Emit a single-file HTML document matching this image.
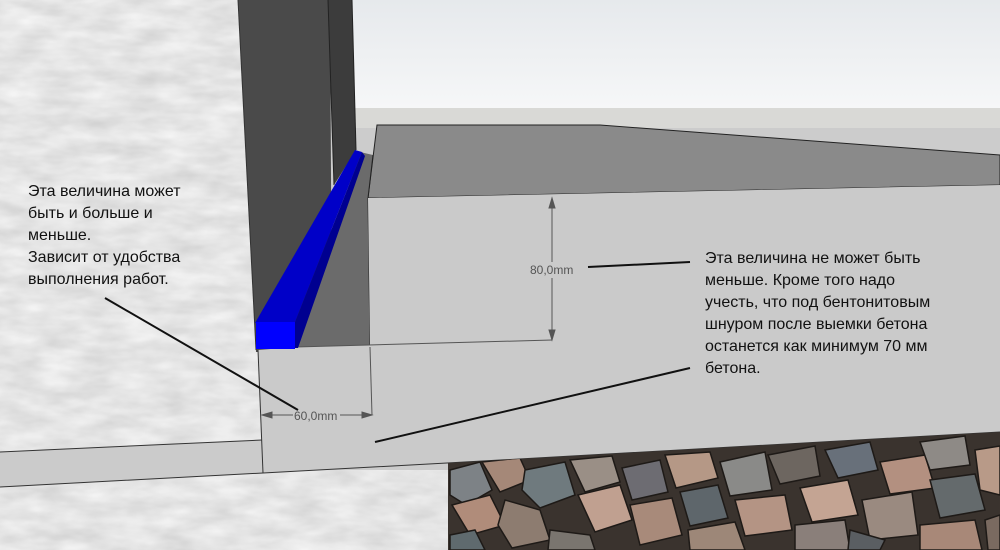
<!DOCTYPE html>
<html><head><meta charset="utf-8"><style>
html,body{margin:0;padding:0;width:1000px;height:550px;overflow:hidden;background:#c9c9c9}
svg{display:block}
text{font-family:"Liberation Sans",sans-serif}
</style></head><body>
<svg width="1000" height="550" viewBox="0 0 1000 550" xmlns="http://www.w3.org/2000/svg">
<defs>
<linearGradient id="sky" x1="0" y1="0" x2="0" y2="1"><stop offset="0" stop-color="#e6e9ec"/><stop offset="1" stop-color="#f6f7f8"/></linearGradient>
<filter id="noise" x="0" y="0" width="100%" height="100%"><feTurbulence type="fractalNoise" baseFrequency="0.025 0.07" numOctaves="3" seed="3"/><feColorMatrix type="matrix" values="0.32 0 0 0 0.62  0.32 0 0 0 0.62  0.32 0 0 0 0.62  0 0 0 0 1"/></filter>
</defs>
<rect width="1000" height="550" fill="#cccccc"/>
<rect width="262" height="550" filter="url(#noise)"/>
<rect x="0" y="470" width="450" height="80" filter="url(#noise)"/>
<rect x="352" y="0" width="648" height="108" fill="url(#sky)"/>
<rect x="352" y="108" width="648" height="20" fill="#d9d9d6"/>
<polygon points="238,0 330,0 332,350 256,352" fill="#4a4a4a"/>
<polygon points="328,0 352,0 356,150 334,185" fill="#3c3c3c"/>
<line x1="328" y1="0" x2="334" y2="185" stroke="#222" stroke-width="1"/>
<line x1="238" y1="0" x2="256" y2="350" stroke="#333" stroke-width="1"/>
<line x1="352" y1="0" x2="356" y2="150" stroke="#222" stroke-width="1"/>
<polygon points="377,125 600,125 1000,155 1000,185 368,198" fill="#8a8a8a" stroke="#222" stroke-width="1"/>
<polygon points="360,152 373,155 368,198 370,345 296,347" fill="#6b6b6b"/>
<line x1="373" y1="155" x2="368" y2="198" stroke="#222"/>
<line x1="368" y1="198" x2="370" y2="345" stroke="#222"/>
<polygon points="368,198 1000,185 1000,432 447,463 263,473 258,350 296,347 370,345" fill="#cacaca"/>
<polygon points="0,452 262,440 263,473 0,487" fill="#cbcbcb"/>
<line x1="296" y1="347" x2="552" y2="340" stroke="#555" stroke-width="1"/>
<line x1="0" y1="452" x2="262" y2="440" stroke="#333"/>
<polyline points="0,487 263,473 447,463 1000,432" fill="none" stroke="#333"/>
<line x1="258" y1="350" x2="263" y2="473" stroke="#333"/>
<clipPath id="gc"><polygon points="448,463 1000,432 1000,550 448,550"/></clipPath>
<g clip-path="url(#gc)">
<rect x="448" y="430" width="552" height="120" fill="#3a332e"/>
<g stroke="#1e1a17" stroke-width="1.5">
<polygon points="450,470 480,462 492,490 466,505 450,495" fill="#7d8286"/>
<polygon points="482,462 520,458 530,480 500,492" fill="#a58878"/>
<polygon points="525,470 565,462 575,495 540,508 522,490" fill="#6f7a7e"/>
<polygon points="452,505 490,495 505,525 470,535" fill="#b08c7a"/>
<polygon points="505,500 540,510 550,540 512,548 498,525" fill="#8d7c70"/>
<polygon points="450,535 475,530 485,550 450,550" fill="#5f6a6e"/>
<polygon points="570,460 612,456 620,482 585,492" fill="#9a8f86"/>
<polygon points="578,495 620,485 632,520 595,532" fill="#c0a090"/>
<polygon points="550,530 590,535 595,550 548,550" fill="#7a756f"/>
<polygon points="622,468 660,460 668,492 632,500" fill="#6d6c72"/>
<polygon points="630,505 672,498 682,535 640,545" fill="#a88a7a"/>
<polygon points="665,455 710,452 718,478 676,488" fill="#b59886"/>
<polygon points="680,492 718,485 728,518 690,526" fill="#5e666b"/>
<polygon points="688,530 735,522 745,550 690,550" fill="#9d8778"/>
<polygon points="720,462 765,452 772,490 730,496" fill="#8a8a88"/>
<polygon points="735,500 785,495 792,530 745,536" fill="#b49484"/>
<polygon points="768,455 815,446 820,476 780,484" fill="#6d6660"/>
<polygon points="795,525 845,520 850,550 795,550" fill="#8a7f7a"/>
<polygon points="800,488 848,480 858,515 812,522" fill="#c4a493"/>
<polygon points="825,450 870,442 878,470 838,478" fill="#68707a"/>
<polygon points="862,500 912,492 918,535 870,540" fill="#9a8a80"/>
<polygon points="880,462 925,455 935,488 890,494" fill="#b39080"/>
<polygon points="920,442 965,436 970,465 930,470" fill="#8e8a86"/>
<polygon points="930,480 975,474 985,510 940,518" fill="#646a6c"/>
<polygon points="920,525 975,520 982,550 920,550" fill="#a88878"/>
<polygon points="975,450 1000,446 1000,495 980,490" fill="#b89a88"/>
<polygon points="850,530 885,540 880,550 848,550" fill="#5a5e62"/>
<polygon points="985,520 1000,515 1000,550 988,550" fill="#7a6a60"/>
</g>
</g>
<polygon points="255,323 355,150 362,152 295,322" fill="#0000c8"/>
<polygon points="295,322 362,152 365,156 298,348 295,348" fill="#000090"/>
<rect x="256" y="322" width="39" height="27" fill="#0000ff"/>
<g stroke="#555" stroke-width="1" fill="#555">
<line x1="552" y1="200" x2="552" y2="262"/><line x1="552" y1="278" x2="552" y2="338"/>
<polygon points="552,198 549,208 555,208"/><polygon points="552,340 549,330 555,330"/>
<line x1="370" y1="347" x2="372" y2="415"/>
<line x1="262" y1="415" x2="293" y2="415"/><line x1="340" y1="415" x2="370" y2="415"/>
<polygon points="262,415 272,412 272,418"/><polygon points="372,415 362,412 362,418"/>
</g>
<text x="530" y="274" font-size="12" fill="#555">80,0mm</text>
<text x="294" y="420" font-size="12" fill="#555">60,0mm</text>
<g stroke="#111" stroke-width="2">
<line x1="105" y1="298" x2="298" y2="410"/>
<line x1="375" y1="442" x2="690" y2="368"/>
<line x1="588" y1="267" x2="690" y2="262"/>
</g>
<g font-size="16" fill="#111">
<text x="28" y="196">Эта величина может</text>
<text x="28" y="218">быть и больше и</text>
<text x="28" y="240">меньше.</text>
<text x="28" y="262">Зависит от удобства</text>
<text x="28" y="284">выполнения работ.</text>
<text x="705" y="263">Эта величина не может быть</text>
<text x="705" y="285">меньше. Кроме того надо</text>
<text x="705" y="307">учесть, что под бентонитовым</text>
<text x="705" y="329">шнуром после выемки бетона</text>
<text x="705" y="351">останется как минимум 70 мм</text>
<text x="705" y="373">бетона.</text>
</g>
</svg>
</body></html>
